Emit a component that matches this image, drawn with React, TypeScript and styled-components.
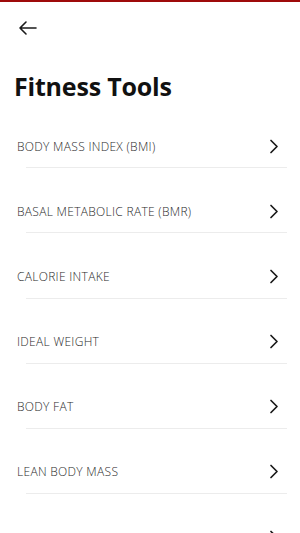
import React from "react";
import styled, { createGlobalStyle } from "styled-components";

const GlobalStyle = createGlobalStyle`
    html, body {
        margin: 0;
        padding: 0;
        background: #ffffff;
        font-family: "Open Sans", "Liberation Sans", sans-serif;
    }
`;

const tools = [
    "BODY MASS INDEX (BMI)",
    "BASAL METABOLIC RATE (BMR)",
    "CALORIE INTAKE",
    "IDEAL WEIGHT",
    "BODY FAT",
    "LEAN BODY MASS",
    "WAIST TO HIP RATIO",
];

function BackIcon() {
    return (
        <svg width="20" height="16" viewBox="0 0 20 16" fill="none">
            <path
                d="M2 8H18M8 2L2 8L8 14"
                stroke="#1a1a1a"
                strokeWidth="1.6"
                strokeLinecap="round"
                strokeLinejoin="round"
            />
        </svg>
    );
}

function Chevron() {
    return (
        <svg width="10" height="15" viewBox="0 0 10 15" fill="none">
            <path
                d="M2 1.5L8 7.5L2 13.5"
                stroke="#1a1a1a"
                strokeWidth="1.7"
                strokeLinecap="round"
                strokeLinejoin="round"
            />
        </svg>
    );
}

function App() {
    return (
        <>
            <GlobalStyle />
            <Screen>
                <Header>
                    <BackButton aria-label="Back">
                        <BackIcon />
                    </BackButton>
                </Header>
                <Title>Fitness Tools</Title>
                <List>
                    {tools.map((tool) => (
                        <li key={tool}>
                            <Row>
                                <Label>{tool}</Label>
                                <Chevron />
                            </Row>
                            <Divider />
                        </li>
                    ))}
                </List>
            </Screen>
        </>
    );
}

const Screen = styled.main`
    width: 300px;
    height: 533px;
    overflow: hidden;
    border-top: 2px solid #9e0a0a;
    box-sizing: border-box;
    background: #ffffff;
`;

const Header = styled.header`
    height: 50px;
    display: flex;
    align-items: center;
    padding-left: 18px;
    padding-top: 2px;
    box-sizing: border-box;
`;

const BackButton = styled.button`
    border: none;
    background: none;
    padding: 0;
    display: flex;
    cursor: pointer;
`;

const Title = styled.h1`
    margin: 17px 0 0 14px;
    font-size: 25px;
    line-height: 34px;
    font-weight: 700;
    color: #111111;
    letter-spacing: -0.2px;
`;

const List = styled.ul`
    list-style: none;
    margin: 0;
    padding: 0;
`;

const Row = styled.div`
    display: flex;
    align-items: center;
    justify-content: space-between;
    height: 20px;
    padding: 33px 21px 11.2px 17px;
`;

const Label = styled.span`
    font-size: 12px;
    font-weight: 300;
    color: #2a2a2a;
    letter-spacing: 0.3px;
`;

const Divider = styled.div`
    height: 1px;
    margin: 0 13px 0 26px;
    background: #ececec;
`;

export default App;
